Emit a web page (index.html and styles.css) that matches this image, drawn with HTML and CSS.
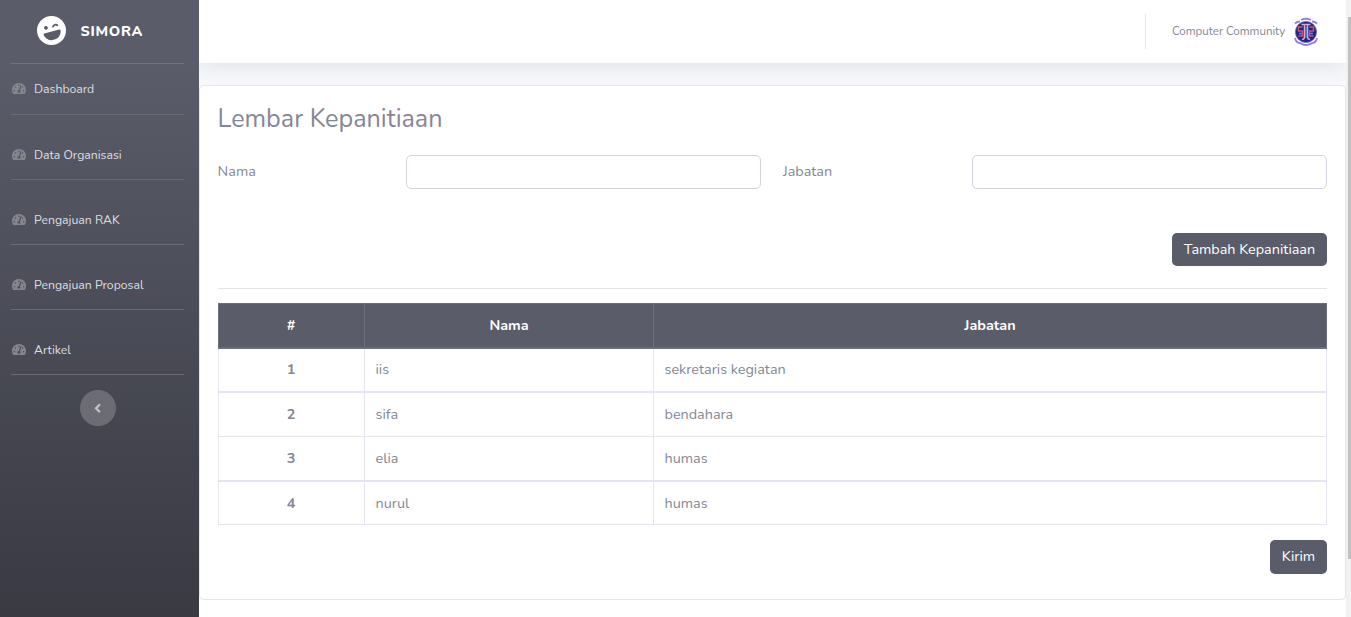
FILE: index.html
```html
<!DOCTYPE html>
<html lang="id">
<head>
<meta charset="utf-8">
<title>SIMORA</title>
<link rel="stylesheet" href="styles.css">
</head>
<body>
<svg class="defs" width="0" height="0" aria-hidden="true">
  <symbol id="gauge" viewBox="0 0 576 512"><path d="M288 32C128.94 32 0 160.94 0 320c0 52.8 14.25 102.26 39.06 144.8 5.61 9.62 16.3 15.2 27.44 15.2h443c11.14 0 21.83-5.58 27.44-15.2C561.75 422.26 576 372.8 576 320c0-159.06-128.94-288-288-288zm0 64c14.71 0 26.58 10.13 30.32 23.65-1.11 2.26-2.64 4.23-3.45 6.67l-9.22 27.67c-5.13 3.49-10.97 6.01-17.64 6.01-17.67 0-32-14.33-32-32S270.33 96 288 96zM96 384c-17.67 0-32-14.33-32-32s14.33-32 32-32 32 14.33 32 32-14.33 32-32 32zm48-160c-17.67 0-32-14.33-32-32s14.33-32 32-32 32 14.33 32 32-14.33 32-32 32zm246.77-72.41l-61.33 184C343.13 347.33 352 364.54 352 384c0 11.72-3.38 22.55-8.88 32H232.88c-5.5-9.45-8.88-20.28-8.88-32 0-33.94 26.5-61.43 59.9-63.59l61.34-184.01c4.17-12.56 17.73-19.45 30.36-15.17 12.57 4.19 19.35 17.79 15.17 30.36zm14.66 57.2l15.52-46.55c3.47-1.29 7.13-2.23 11.05-2.23 17.67 0 32 14.33 32 32s-14.33 32-32 32c-11.38-.01-20.89-6.28-26.57-15.22zM480 384c-17.67 0-32-14.33-32-32s14.33-32 32-32 32 14.33 32 32-14.33 32-32 32z"/></symbol>
</svg>
<div class="app">
  <nav class="sidebar">
    <a class="brand">
      <svg class="brand-icon" viewBox="0 0 496 496">
        <circle class="face" cx="248" cy="248" r="248"/>
        <g transform="rotate(-15 248 248)">
          <circle class="feature" cx="168" cy="180" r="32"/>
          <path class="wink" d="M290 190c14-28 64-28 78 0"/>
          <path class="feature" d="M114 266h268c10 0 17 8 16 18-8 70-61 124-126 124h-48c-65 0-118-54-126-124-1-10 6-18 16-18z"/>
        </g>
      </svg>
      <span class="brand-name">SIMORA</span>
    </a>
    <ul class="menu">
      <li class="item first"><svg class="gauge"><use href="#gauge"/></svg><span>Dashboard</span></li>
      <li class="item"><svg class="gauge"><use href="#gauge"/></svg><span>Data Organisasi</span></li>
      <li class="item"><svg class="gauge"><use href="#gauge"/></svg><span>Pengajuan RAK</span></li>
      <li class="item"><svg class="gauge"><use href="#gauge"/></svg><span>Pengajuan Proposal</span></li>
      <li class="item"><svg class="gauge"><use href="#gauge"/></svg><span>Artikel</span></li>
    </ul>
    <button class="toggle" aria-label="Toggle"><svg viewBox="0 0 256 512"><path d="M31.7 239l136-136c9.4-9.4 24.6-9.4 33.9 0l22.6 22.6c9.4 9.4 9.4 24.6 0 33.9L127.9 256l96.4 96.4c9.4 9.4 9.4 24.6 0 33.9L201.7 409c-9.4 9.4-24.6 9.4-33.9 0l-136-136c-9.5-9.4-9.5-24.6-.1-34z"/></svg></button>
  </nav>
  <div class="content">
    <header class="topbar">
      <div class="user">
        <span class="user-name">Computer Community</span>
        <svg class="avatar" viewBox="0 0 28 30">
          <circle class="emblem" cx="14" cy="15" r="10.6"/>
          <path class="ribbon" d="M3 6.500Q5 4.500 8 4.500M9 3q5-2.500 10 0M20 4.500q3 0 5 2M3 21q1 5 6 5.500M8 26q6 4 12 0M19 26.500q5-.5 6-5.500"/>
          <path class="mark-red" d="M10.500 10h-4v4h4v5h-4M17.500 10h4v4h-4v5h4"/>
          <path class="mark-pink" d="M9.500 7.500h9M12.500 8v11.500q0 3-2.500 3M15.500 8v11.500q0 3 2.500 3"/>
          <path class="mark-blue" d="M14 10v11M7 16.500h3M18 16.500h3"/>
        </svg>
      </div>
    </header>
    <main class="card">
      <h1>Lembar Kepanitiaan</h1>
      <form class="fields">
        <label for="nama">Nama</label><input id="nama" type="text">
        <label for="jabatan">Jabatan</label><input id="jabatan" type="text">
      </form>
      <div class="actions"><button class="btn add">Tambah Kepanitiaan</button></div>
      <hr>
      <div class="table">
        <div class="row head"><b>#</b><b>Nama</b><b>Jabatan</b></div>
        <div class="row"><b>1</b><span>iis</span><span>sekretaris kegiatan</span></div>
        <div class="row"><b>2</b><span>sifa</span><span>bendahara</span></div>
        <div class="row"><b>3</b><span>elia</span><span>humas</span></div>
        <div class="row"><b>4</b><span>nurul</span><span>humas</span></div>
      </div>
      <div class="submit"><button class="btn send">Kirim</button></div>
    </main>
    <footer class="footer"></footer>
  </div>
  <div class="scrollbar"><div class="thumb"></div></div>
</div>
</body>
</html>
```

FILE: styles.css
```css
* { box-sizing: border-box; }
body { margin: 0; overflow: hidden; font-family: Nunito, Lato, sans-serif; font-size: 14.4px; color: #858796; background: #fff; }
.defs { display: block; }
.app { display: flex; height: 617px; }

.sidebar { position: relative; z-index: 1; width: 199px; flex: none; padding: 0 15px 0 11px; background: linear-gradient(180deg, #5a5c69 10%, #373840 105%); }
.brand { display: flex; align-items: center; height: 64px; padding: 0 0 2px 26px; border-bottom: 1px solid #71737e; }
.brand-icon { width: 29px; height: 29px; flex: none; }
.face { fill: #fff; }
.feature { fill: #5a5c69; }
.wink { fill: none; stroke: #5a5c69; stroke-width: 30; stroke-linecap: round; }
.brand-name { margin-left: 14.6px; padding-top: 1px; font-weight: 800; letter-spacing: .72px; color: #fff; }
.menu { margin: 0; padding: 0; list-style: none; }
.item { display: flex; align-items: center; height: 65px; padding: 15px 0 0 1px; border-bottom: 1px solid #696a74; font-size: 12.24px; color: #dedfe2; }
.item.first { height: 51px; padding-top: 0; }
.gauge { width: 14px; height: 13px; margin: 0 8px 1px 0; fill: #85868d; }
.toggle { display: flex; align-items: center; justify-content: center; width: 36px; height: 36px; margin: 15px 0 0 69px; padding: 0 1px 0 0; border: 0; border-radius: 50%; background: #6b6c74; }
.toggle svg { width: 7.2px; height: 14.4px; fill: #c4c5c8; }

.content { width: 1147px; flex: none; background: #f8f9fc; }
.topbar { display: flex; justify-content: flex-end; align-items: center; height: 63px; padding-right: 26px; background: #fff; box-shadow: 0 2px 25px rgba(58, 59, 69, .15); }
.user { display: flex; align-items: center; height: 35px; padding-left: 26px; border-left: 1px solid #e3e6f0; }
.user-name { width: 113px; padding-bottom: 1px; white-space: nowrap; font-size: 11.52px; }
.avatar { width: 28px; height: 30px; margin-left: 7px; }
.emblem { fill: #202584; stroke: #6f70b7; stroke-width: .8; }
.ribbon { fill: none; stroke: #9581e3; stroke-width: 1.8; }
.mark-red { fill: none; stroke: #c65378; stroke-width: 1.5; }
.mark-pink { fill: none; stroke: #d6a8cb; stroke-width: 1.5; }
.mark-blue { fill: none; stroke: #5989d9; stroke-width: 1.3; }

.card { position: relative; height: 515px; margin-top: 22px; padding: 18px 18px 0; border: 1px solid #e3e6f0; border-radius: 5px; background: #fff; }
h1 { margin: 0 0 0 -.4px; font-size: 25.2px; line-height: 31px; font-weight: 400; }
.fields { display: grid; grid-template-columns: 188px 355px 211px 355px; align-items: center; margin-top: 20px; }
.fields label { margin-left: -.4px; padding-bottom: 2px; }
.fields label:nth-of-type(2) { padding-left: 22.4px; }
.fields input { width: 355px; height: 34px; border: 1px solid #d1d3e2; border-radius: 5px; background: #fff; }
.actions { display: flex; justify-content: flex-end; margin-top: 44px; }
.btn { height: 33px; padding: 0 0 1px; border: 0; border-radius: 5px; background: #5a5c69; color: #fff; font: inherit; }
.add { width: 155px; }
.send { width: 57px; height: 34px; padding-bottom: 2px; }
hr { height: 1px; margin: 22px 0 14px; border: 0; background: #e4e4e8; }
.table { border: 1px solid #e3e6f0; border-top: 0; }
.row { display: grid; grid-template-columns: 145px 289px 1fr; height: 44px; border-bottom: 1px solid #e3e6f0; }
.row > * { display: flex; align-items: center; padding: 0 10.5px 2px; border-left: 1px solid #e3e6f0; }
.row > :first-child { padding-right: 11.5px; border-left: 0; }
.row b { justify-content: center; }
.row:nth-child(2), .row:nth-child(4) { border-bottom-width: 2px; }
.row:nth-child(4) { height: 45px; }
.row:last-child { height: 42px; border-bottom: 0; }
.row:last-child > * { padding-bottom: 0; }
.row.head { height: 46px; margin: 0 -1px; border: 1px solid #6c6e7e; border-bottom-width: 2px; background: #5a5c69; color: #fff; }
.row.head > * { border-color: #6c6e7e; padding-bottom: 1px; }
.submit { display: flex; justify-content: flex-end; margin-top: 15px; }
.footer { height: 17px; background: #fff; }

.scrollbar { width: 5px; flex: none; padding: 17px 0 0 2px; background: #f1f1f1; }
.thumb { height: 542px; background: #c1c1c1; }
```
